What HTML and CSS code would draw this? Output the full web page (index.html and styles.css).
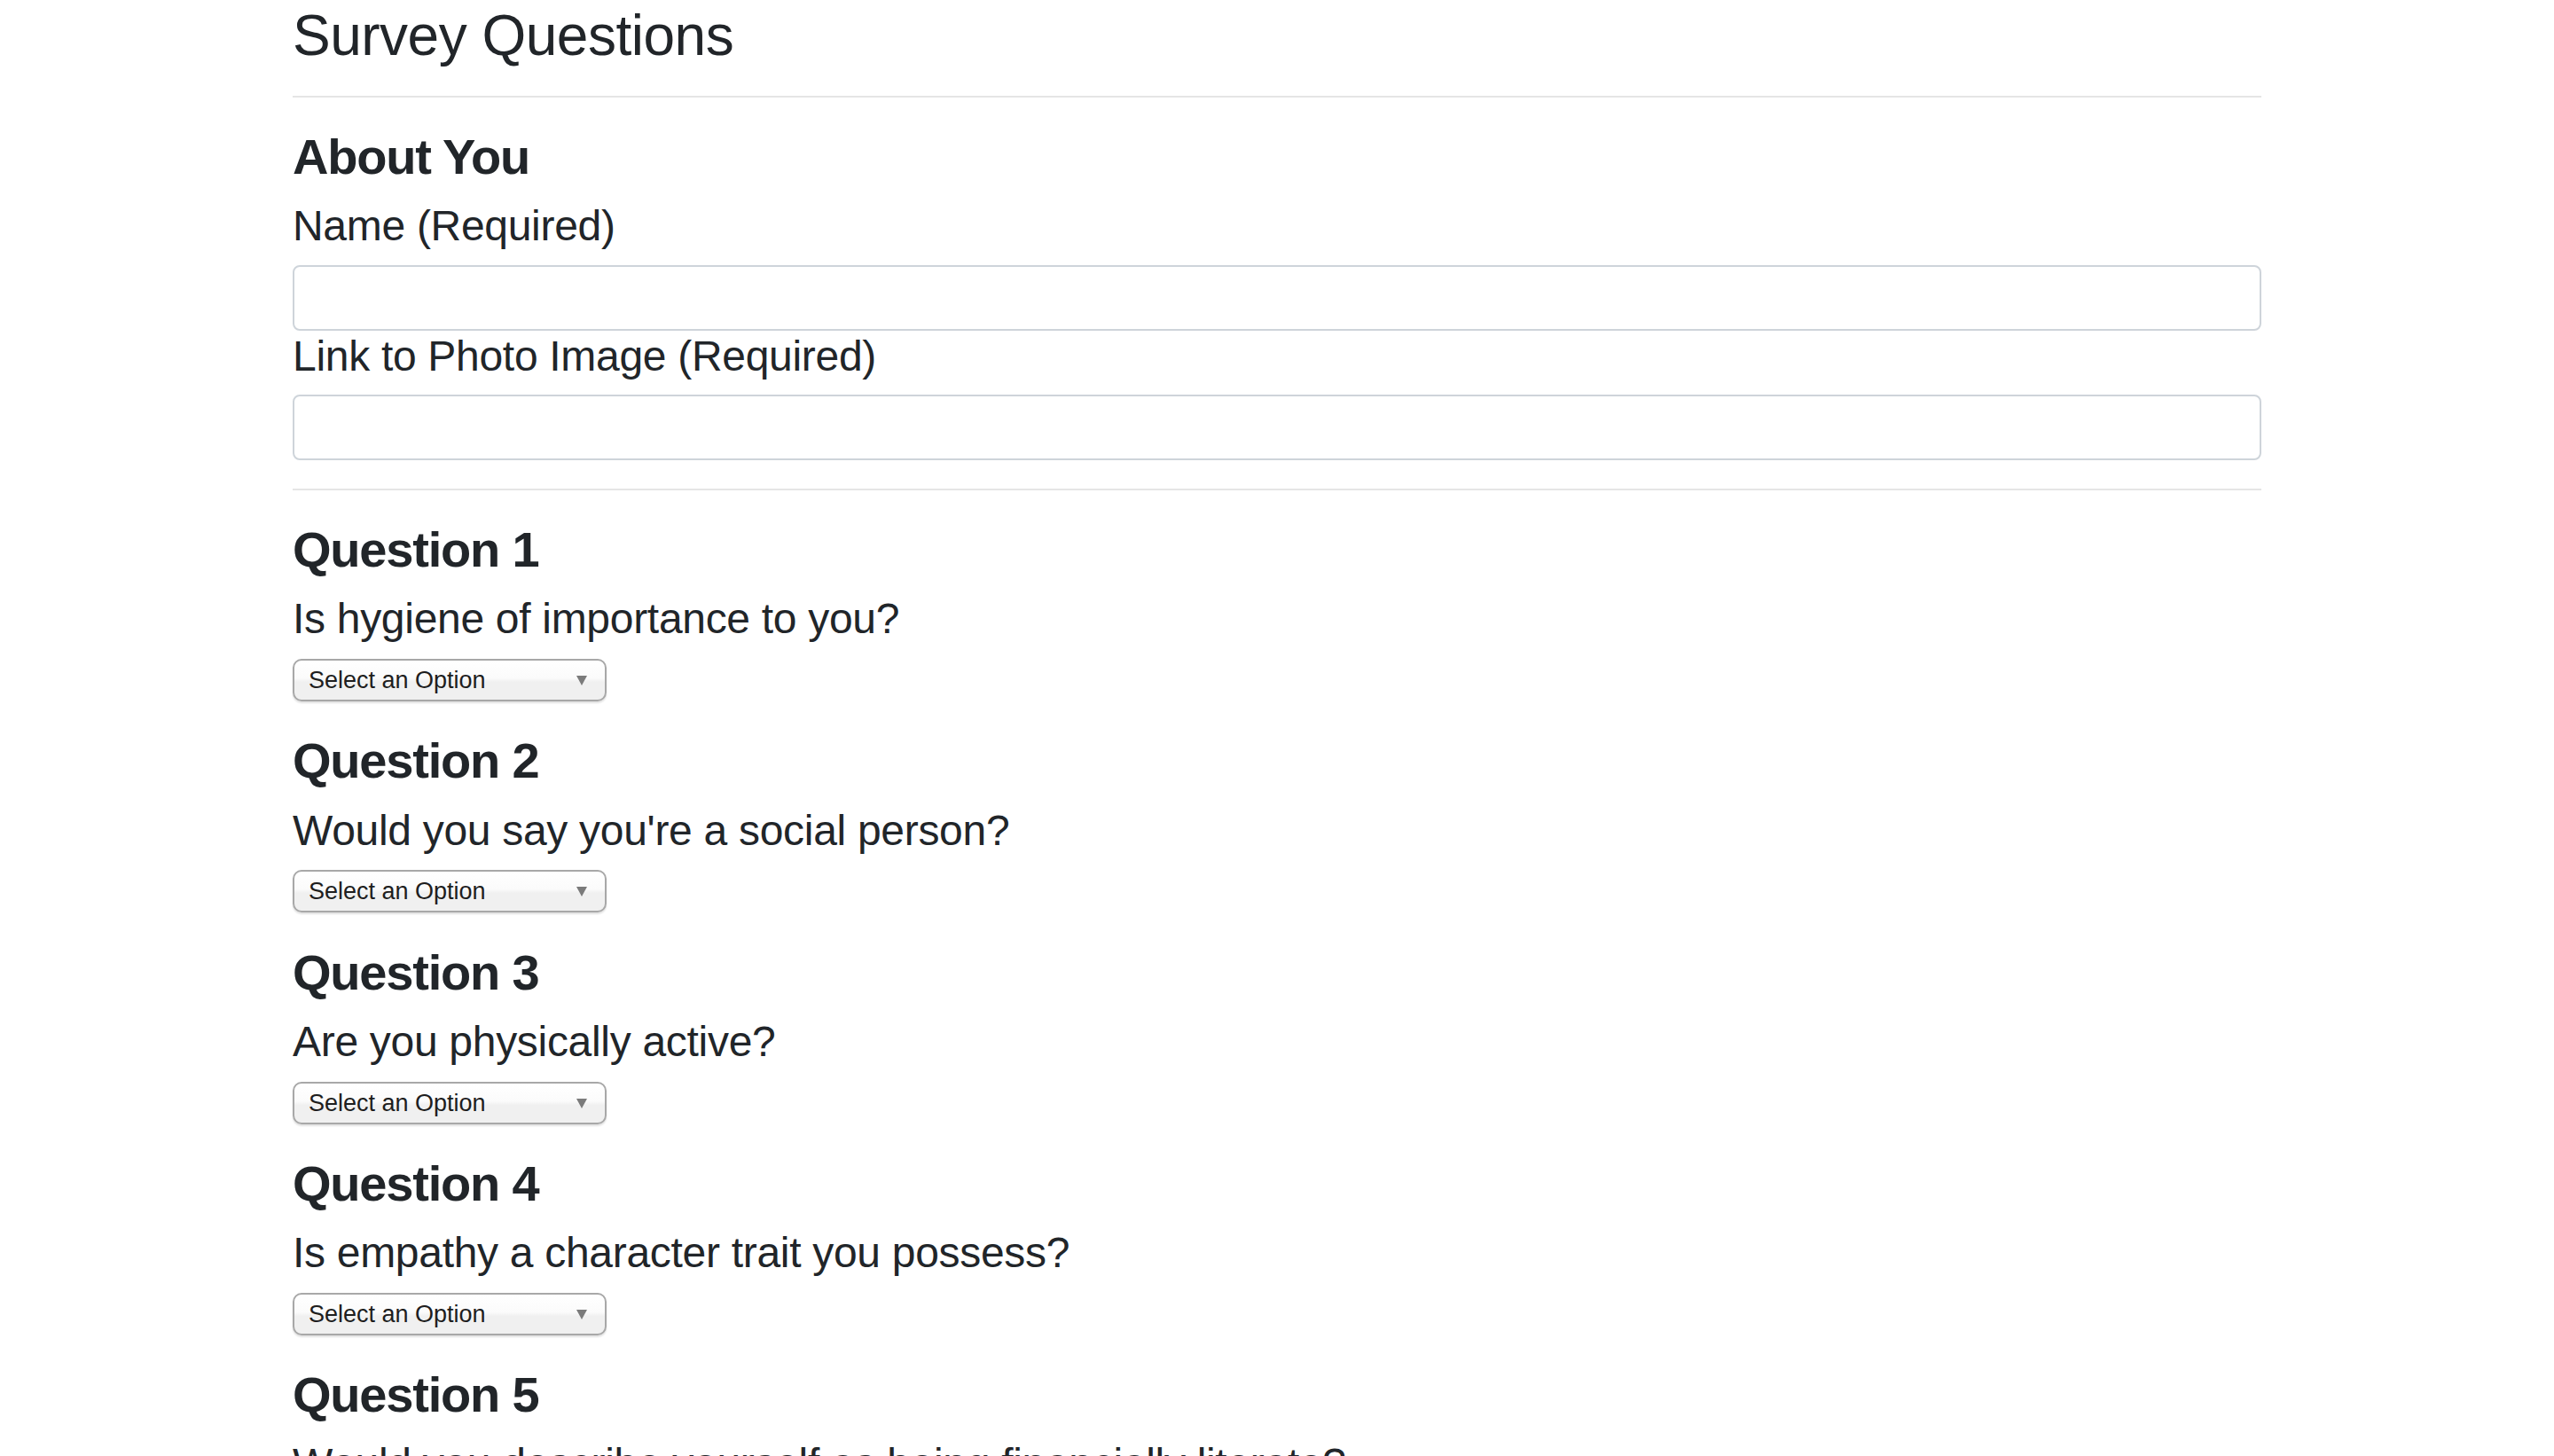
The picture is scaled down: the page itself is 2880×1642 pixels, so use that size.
FILE: index.html
```html
<!DOCTYPE html>
<html lang="en">
<head>
<meta charset="utf-8">
<title>Survey Questions</title>
<link rel="stylesheet" href="styles.css">
</head>
<body>
<div class="container">
  <h1 class="page-title">Survey Questions</h1>
  <hr class="rule rule-top">

  <section class="about">
    <h3 class="section-title">About You</h3>
    <h4 class="field-label">Name (Required)</h4>
    <input class="text-input" type="text">
    <h4 class="field-label">Link to Photo Image (Required)</h4>
    <input class="text-input" type="text">
  </section>

  <hr class="rule rule-mid">

  <section class="question">
    <h3 class="section-title">Question 1</h3>
    <h4 class="question-text">Is hygiene of importance to you?</h4>
    <div class="select-wrap">
      <select class="select-box"><option>Select an Option</option></select>
      <span class="select-arrow"></span>
    </div>
  </section>

  <section class="question">
    <h3 class="section-title">Question 2</h3>
    <h4 class="question-text">Would you say you're a social person?</h4>
    <div class="select-wrap">
      <select class="select-box"><option>Select an Option</option></select>
      <span class="select-arrow"></span>
    </div>
  </section>

  <section class="question">
    <h3 class="section-title">Question 3</h3>
    <h4 class="question-text">Are you physically active?</h4>
    <div class="select-wrap">
      <select class="select-box"><option>Select an Option</option></select>
      <span class="select-arrow"></span>
    </div>
  </section>

  <section class="question">
    <h3 class="section-title">Question 4</h3>
    <h4 class="question-text">Is empathy a character trait you possess?</h4>
    <div class="select-wrap">
      <select class="select-box"><option>Select an Option</option></select>
      <span class="select-arrow"></span>
    </div>
  </section>

  <section class="question">
    <h3 class="section-title">Question 5</h3>
    <h4 class="question-text">Would you describe yourself as being financially literate?</h4>
    <div class="select-wrap">
      <select class="select-box"><option>Select an Option</option></select>
      <span class="select-arrow"></span>
    </div>
  </section>
</div>
</body>
</html>
```

FILE: styles.css
```css
html {
  scrollbar-width: none;
}
html::-webkit-scrollbar {
  display: none;
}
body {
  margin: 0;
  background: #ffffff;
  color: #212529;
  font-family: "Liberation Sans", Arial, sans-serif;
}
.container {
  max-width: 2220px;
  margin: 0 auto;
  padding: 2px 30px 0;
  display: flex;
  flex-direction: column;
}
.page-title {
  margin: 0;
  font-size: 64px;
  font-weight: 400;
  line-height: 1.2;
  letter-spacing: -0.5px;
}
.rule {
  width: 100%;
  margin: 0;
  border: 0;
  border-top: 2px solid rgba(0, 0, 0, 0.1);
}
.rule-top {
  margin-top: 29px;
  margin-bottom: 33px;
}
.rule-mid {
  margin-top: 32px;
  margin-bottom: 33px;
}
.about,
.question {
  display: flex;
  flex-direction: column;
  align-items: flex-start;
}
.question {
  margin-bottom: 33.5px;
}
.section-title {
  margin: 0 0 16px;
  font-size: 56px;
  font-weight: 700;
  letter-spacing: -1.2px;
  line-height: 1.2;
}
.field-label,
.question-text {
  margin: 0 0 15px;
  font-size: 48px;
  font-weight: 400;
  line-height: 1.2;
  letter-spacing: -0.3px;
}
.question-text {
  margin-bottom: 16px;
}
.text-input {
  box-sizing: border-box;
  width: 100%;
  height: 74px;
  margin: 0;
  border: 2px solid #ced4da;
  border-radius: 8px;
  background: #fff;
  font-size: 32px;
  font-family: inherit;
}
.select-wrap {
  position: relative;
  width: 354px;
  height: 48px;
}
.select-box {
  -webkit-appearance: none;
  appearance: none;
  box-sizing: border-box;
  width: 100%;
  height: 100%;
  margin: 0;
  padding: 0 40px 0 16px;
  border: 2px solid #a8a8a8;
  border-radius: 10px;
  background: linear-gradient(to bottom, #ffffff 0%, #fbfbfb 45%, #f0f0f0 55%, #f0f0f0 100%);
  box-shadow: 0 2px 2px rgba(0, 0, 0, 0.12);
  color: #1e1e1e;
  font-family: "Liberation Sans", Arial, sans-serif;
  font-size: 27px;
  line-height: 44px;
}
.select-arrow {
  position: absolute;
  right: 22px;
  top: 19px;
  width: 0;
  height: 0;
  border-left: 6px solid transparent;
  border-right: 6px solid transparent;
  border-top: 11px solid #7b7b7b;
  pointer-events: none;
}
```
